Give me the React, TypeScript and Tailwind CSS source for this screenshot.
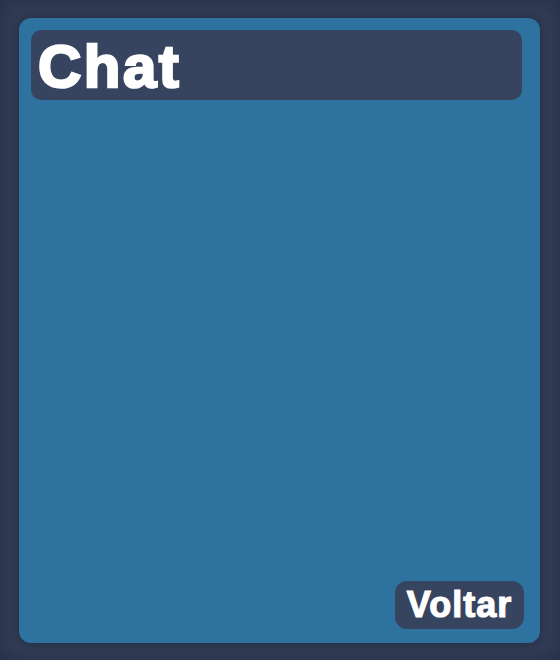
import React from 'react';

export default function App() {
  return (
    <div className="h-[660px] w-[560px] bg-[#343f59] shadow-[inset_0_0_24px_rgba(15,20,35,0.4)] pt-[18px] pb-[17px] pl-[19px] pr-[20px] font-['Liberation_Sans',Arial,sans-serif]">
      <div className="h-full flex flex-col rounded-[12px] bg-[#2e73a0] shadow-[0_0_10px_rgba(10,15,30,0.45)] pt-[12px] pl-[12px] pr-[16px] pb-[14px]">
        <div className="h-[70px] mr-[2px] rounded-[10px] bg-[#36445f] pl-[7px] pt-[7px]">
          <h1 className="text-[60px] leading-none font-bold tracking-[2.5px] text-white [-webkit-text-stroke:2.5px_white] [paint-order:stroke_fill]">
            Chat
          </h1>
        </div>
        <div className="flex-1" />
        <div className="flex justify-end">
          <button className="h-[48px] w-[129px] rounded-[12px] bg-[#36445f] text-[36px] leading-none font-bold tracking-[1px] text-white [-webkit-text-stroke:1.2px_white] [paint-order:stroke_fill]">
            Voltar
          </button>
        </div>
      </div>
    </div>
  );
}
